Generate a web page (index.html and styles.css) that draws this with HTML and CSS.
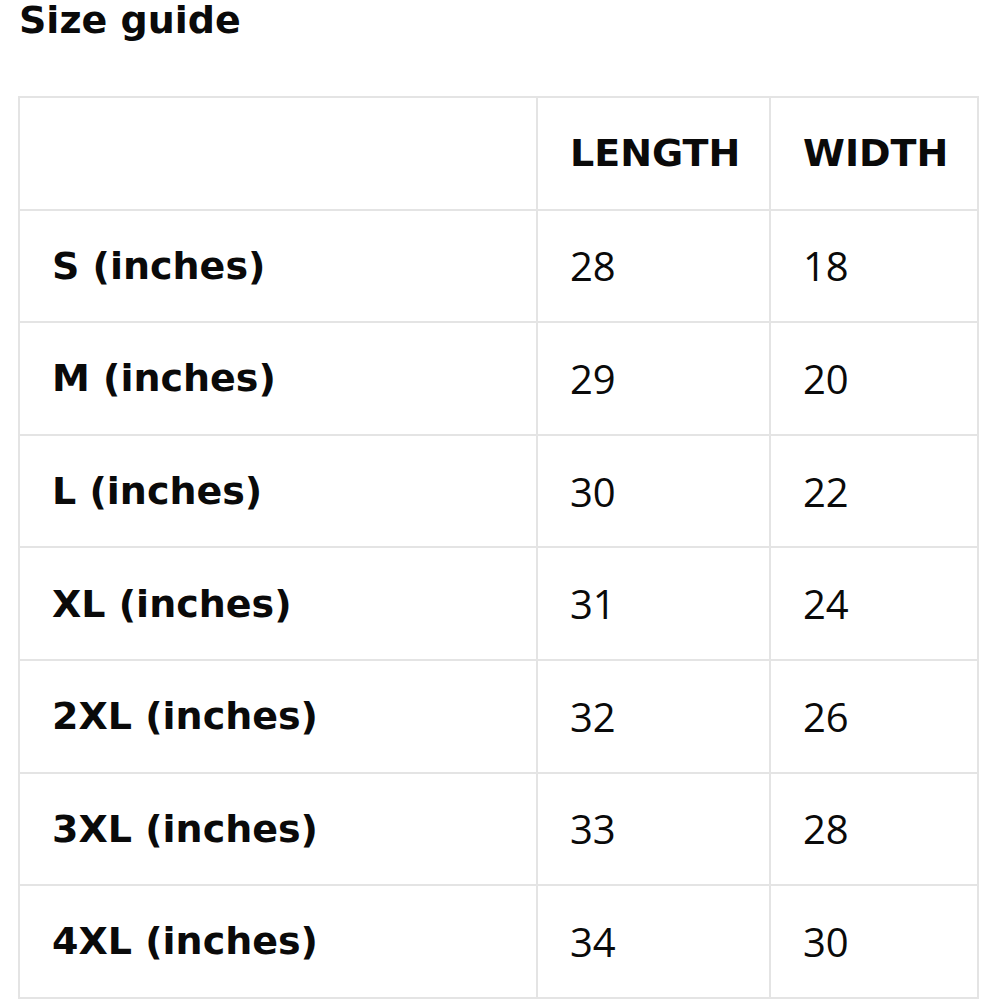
FILE: index.html
```html
<!DOCTYPE html>
<html>
<head>
<meta charset="utf-8">
<link rel="stylesheet" href="styles.css">
</head>
<body>
<h1 class="title">Size guide</h1>
<table class="guide">
  <colgroup><col class="c1"><col class="c2"><col class="c3"></colgroup>
  <tr class="head"><th></th><th>LENGTH</th><th>WIDTH</th></tr>
  <tr><th>S (inches)</th><td>28</td><td>18</td></tr>
  <tr><th>M (inches)</th><td>29</td><td>20</td></tr>
  <tr><th>L (inches)</th><td>30</td><td>22</td></tr>
  <tr><th>XL (inches)</th><td>31</td><td>24</td></tr>
  <tr><th>2XL (inches)</th><td>32</td><td>26</td></tr>
  <tr><th>3XL (inches)</th><td>33</td><td>28</td></tr>
  <tr><th>4XL (inches)</th><td>34</td><td>30</td></tr>
</table>
</body>
</html>
```
FILE: styles.css
```css
html, body { margin: 0; padding: 0; background: #fff; }
body { font-family: "DejaVu Sans", sans-serif; color: #0a0a0a; }
.title {
  margin: 0 0 0 19px;
  font-size: 38px;
  font-weight: bold;
  line-height: 40px;
}
.guide {
  margin: 56px 0 0 18px;
  border-collapse: collapse;
  table-layout: fixed;
  width: 959px;
}
.c1 { width: 518px; }
.c2 { width: 233px; }
.c3 { width: 208px; }
.guide tr { height: 112.6px; }
.guide th, .guide td {
  border: 2px solid #e4e4e4;
  padding: 0 0 0 32px;
  text-align: left;
  vertical-align: middle;
}
.guide th { font-weight: bold; font-size: 38px; }
.guide td { font-family: "Open Sans", sans-serif; font-size: 40px; font-weight: normal; }
```
